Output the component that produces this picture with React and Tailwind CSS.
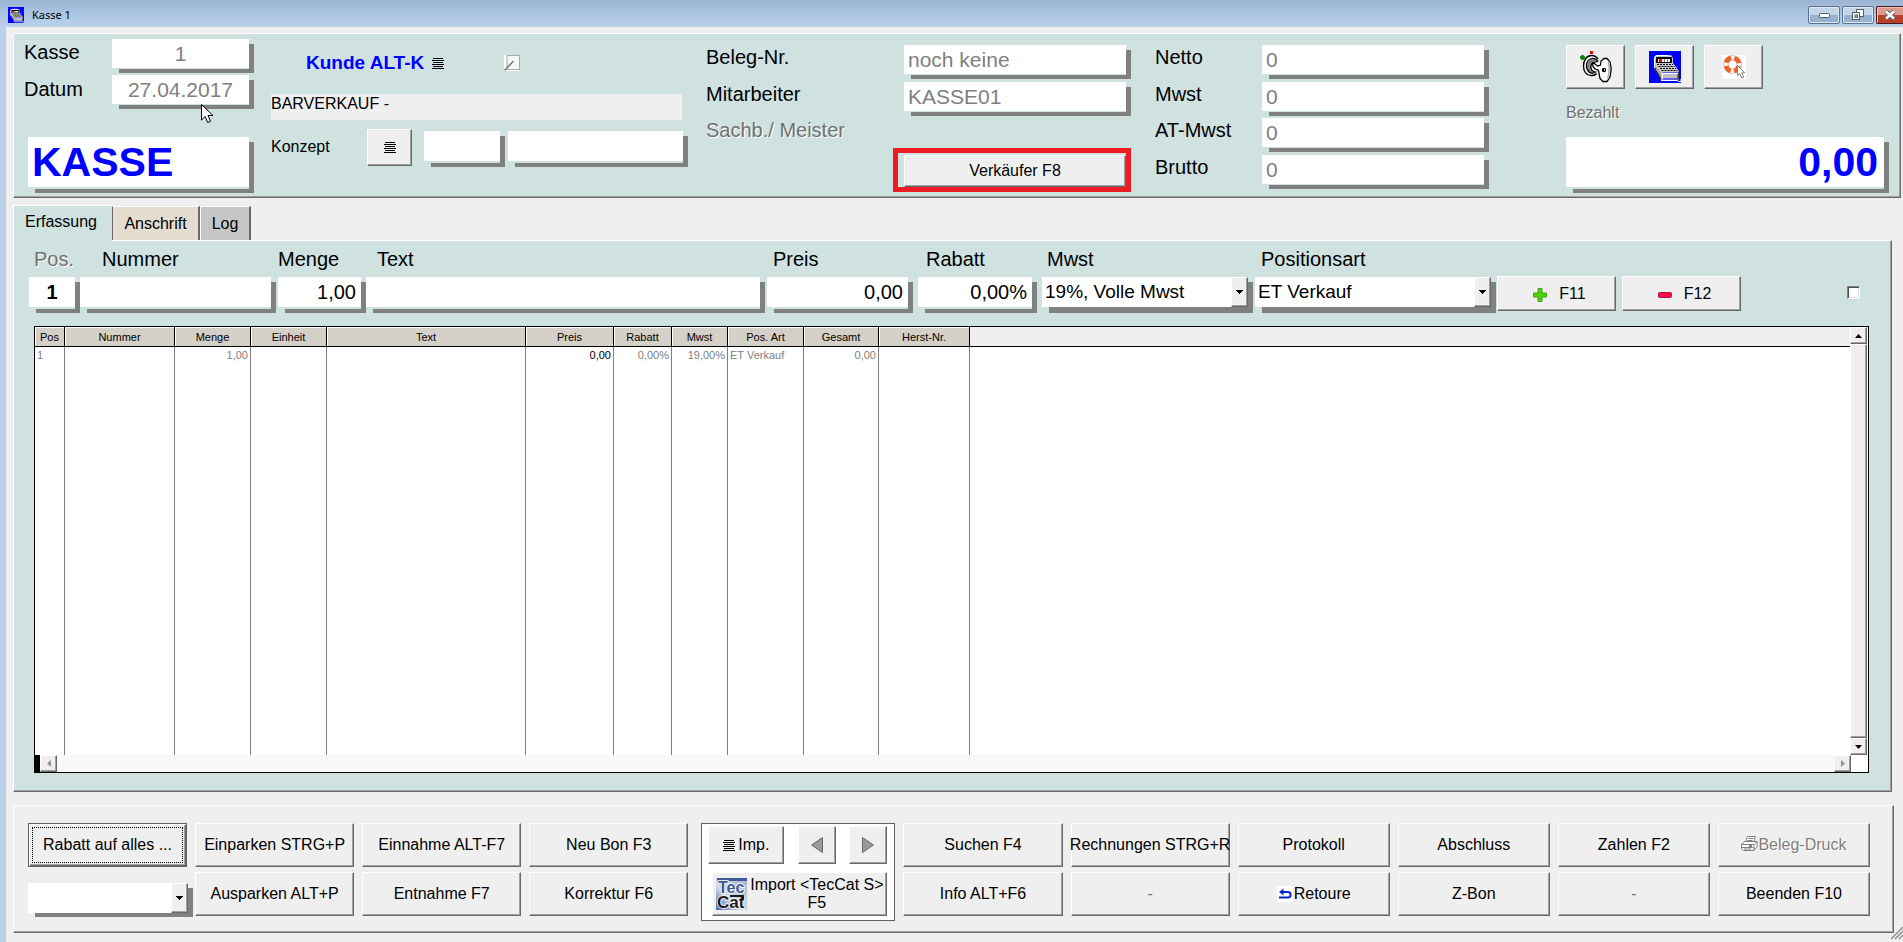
import React from "react";

const RAISED =
  "border border-t-white border-l-white border-r-[#696969] border-b-[#696969] shadow-[inset_-1px_-1px_0_#a0a0a0] bg-[#efefef]";
const PANEL =
  "border border-t-white border-l-white border-r-[#696969] border-b-[#696969] shadow-[inset_-1px_-1px_0_#a0a0a0]";
const DROP =
  "pr-[5px] bg-[linear-gradient(#808080,#808080)] bg-no-repeat bg-right-bottom bg-[length:calc(100%-7px)_calc(100%-5px)]";

function Shadowed({ className = "", children }) {
  return <div className={`${DROP} ${className}`}>{children}</div>;
}

function Field({
  label,
  value = "",
  wrap = "",
  box = "h-[30px] border-b",
  text = "text-[21px] text-[#808080] px-1",
  ...rest
}) {
  return (
    <Shadowed className={`pb-1 ${wrap}`}>
      <input
        aria-label={label}
        defaultValue={value}
        className={`block w-full border-[#cfe2e0] bg-white outline-none ${box} ${text}`}
        {...rest}
      />
    </Shadowed>
  );
}

function DropDown({ id, label, value, wrap = "", box = "h-[30px]" }) {
  return (
    <Shadowed className={wrap}>
      <div className="relative">
        <select
          id={id}
          aria-label={label}
          className={`block w-full appearance-none bg-white pl-[3px] text-[19px] text-black outline-none ${box}`}
        >
          <option>{value}</option>
        </select>
        <span
          aria-hidden="true"
          className={`pointer-events-none absolute inset-y-0 right-0 flex w-[17px] items-center justify-center ${RAISED}`}
        >
          <svg width="7" height="4" shapeRendering="crispEdges">
            <path d="M0 0h7v1h-1v1h-1v1h-1v1h-1v-1h-1v-1h-1v-1h-1z" fill="#000" />
          </svg>
        </span>
      </div>
    </Shadowed>
  );
}

function Btn({ children, className = "", ...rest }) {
  return (
    <button
      type="button"
      className={`flex min-w-0 items-center justify-center whitespace-nowrap text-[16px] text-black ${RAISED} ${className}`}
      {...rest}
    >
      {children}
    </button>
  );
}

function LinesIcon() {
  return (
    <svg width="12" height="11" shapeRendering="crispEdges" className="shrink-0">
      <path d="M1 .5h10M0 2.5h12M1 4.5h10M0 6.5h12M1 8.5h10M0 10.5h12" stroke="#000" />
    </svg>
  );
}

function RegisterIcon({ size }) {
  return (
    <svg width={size} height={size} viewBox="0 0 32 32" className="shrink-0">
      <rect width="32" height="32" fill="#00f" />
      <path d="M5 6l2-2h15l2 3v5l6 8v9H12L5 17z" fill="#c8c8c8" />
      <path d="M5 13l7 9v7L5 17z" fill="#a0a0a0" />
      <path d="M5.500 17V6.500L7.500 4.500H19" fill="none" stroke="#fff" />
      <rect x="7" y="6" width="16" height="6" rx="1" fill="#000" />
      <rect x="9" y="8" width="12" height="3" fill="#fff" />
      <rect x="10" y="8" width="3" height="3" fill="#f00" />
      <path d="M15.500 8v3M18.500 8v3" stroke="#808080" />
      <g stroke="#000" strokeWidth="1.200" strokeDasharray="2 1">
        <path d="M8 13.500h16" />
        <path d="M9.500 15.500h16" />
        <path d="M11 17.500h16" />
        <path d="M12.500 19.500h16" />
      </g>
      <path d="M5.500 17l6.500 11.500" stroke="#000" />
      <path d="M13.500 22h15.500v6H13.500z" fill="#c0c0c0" stroke="#00f" />
      <path d="M14 22.500h15M13.500 22v6" stroke="#fff" fill="none" />
      <path d="M12 29.500h16l2 1h2v-2.500" stroke="#fff" fill="none" />
      <path d="M29.500 20.500v8" stroke="#404040" />
    </svg>
  );
}

function KeyIcon() {
  return (
    <svg width="34" height="32" viewBox="0 0 34 32">
      <path d="M1 6.500h5M3.500 4v5" stroke="#008000" strokeWidth="2.400" />
      <rect x="11" y="0" width="3" height="3" fill="#f00" />
      <path
        d="M19 8C17 5 15 4.500 12.500 4.500 8 4.500 4.500 9 4.500 15c0 5.500 3 9.500 7.500 9.500 2.500 0 4.500-.5 5.500-2"
        fill="#fff"
        stroke="#000"
        strokeWidth="1.400"
      />
      <path
        d="M19 10c-1.500-2-3.500-3-6-2.500-4 .5-6 4-5.500 8.500.4 4 3 6.500 7 6l2-1c-3.500-.5-5-3-4.500-6 .3-2.500 2-4 5-4z"
        fill="#808080"
        stroke="#000"
        strokeWidth="1.200"
      />
      <path
        d="M13.500 12l2 .5 3 2.500 3-1 .5-4 3-2.500h3l3 3.500 1.200 7-1.200 8-3 4.500h-4l-3-3-1-5-.5-3-4-2-1.500-2z"
        fill="#fff"
        stroke="#000"
        strokeWidth="1.300"
      />
      <path d="M29.500 10.500c1 4 1 12-.8 17" stroke="#b0b0b0" strokeWidth="1.500" fill="none" />
      <circle cx="25" cy="19" r="2.200" fill="#000" />
      <rect x="25" y="18" width="1" height="2" fill="#aaa" />
    </svg>
  );
}

function HelpIcon() {
  return (
    <svg width="24" height="24" viewBox="0 0 24 24">
      <rect width="24" height="24" fill="#fff" />
      <circle cx="10.500" cy="9.500" r="6.600" fill="none" stroke="#b5b5b5" strokeWidth="5.600" />
      <circle cx="10.500" cy="9.500" r="6.600" fill="none" stroke="#f4f4f4" strokeWidth="4.600" />
      <circle
        cx="10.500"
        cy="9.500"
        r="6.600"
        fill="none"
        stroke="#f0602c"
        strokeWidth="4.600"
        strokeDasharray="7 3.367"
        strokeDashoffset="-1.700"
      />
      <path d="M15.500 10.500v10l2.200-2 2 4.500 2-1-2-4.200h3z" fill="#fff" stroke="#777" strokeWidth="0.900" />
    </svg>
  );
}

function NoteIcon() {
  return (
    <svg width="16" height="16">
      <rect x="0" y="0" width="16" height="16" fill="#fff" />
      <rect x="3" y="0.500" width="12.500" height="14" fill="#f6f6f6" stroke="#aaa" />
      <path d="M0.500 15.500l9-9.500" stroke="#777" strokeWidth="1.500" />
    </svg>
  );
}

function Tri({ d, fill = "#000", w, h }) {
  return (
    <svg width={w} height={h}>
      <path d={d} fill={fill} />
    </svg>
  );
}

function TecCatLogo() {
  return (
    <svg
      width="31"
      height="32"
      viewBox="0 0 31 32"
      className="shrink-0 overflow-visible"
      fontFamily="Liberation Sans, sans-serif"
      fontWeight="bold"
    >
      <defs>
        <linearGradient id="tc" x1="0" y1="1" x2="1" y2="0">
          <stop offset="0" stopColor="#4a68a8" />
          <stop offset=".4" stopColor="#d5dbe8" />
          <stop offset="1" stopColor="#a9b4cc" />
        </linearGradient>
      </defs>
      <rect width="31" height="32" fill="url(#tc)" />
      <rect x="1" width="30" height="3" fill="#3c5a96" />
      <text x="2" y="15" fontSize="16" fill="#3c5a96" stroke="#fff" strokeWidth="1.500" paintOrder="stroke">Tec</text>
      <text x="1" y="30" fontSize="17" fill="#1c1c24" stroke="#fff" strokeWidth="1.500" paintOrder="stroke">Cat</text>
      <path d="M14 18h13v3" fill="none" stroke="#1c1c24" strokeWidth="2" />
    </svg>
  );
}

function PrinterIcon() {
  return (
    <svg width="17" height="15" viewBox="0 0 17 15" fill="none" stroke="#808080" className="-mt-1 shrink-0">
      <path d="M4.500 6l2-5.500h8l-2 5.500" fill="#fff" />
      <path d="M7.500 2.500h5M6.500 4.500h5" />
      <path d="M.5 8.500l3-3h12.500v5l-3 4H2.500l-2-2z" fill="#fff" />
      <path d="M.5 8.500h12.500v6M13 8.500l3-3M1 11.500h11M3 13h7" />
      <path d="M8 10h3" strokeWidth="2" />
    </svg>
  );
}

function ReturnIcon() {
  return (
    <svg width="16" height="16" className="mr-px shrink-0">
      <rect width="16" height="16" fill="#fff" />
      <path d="M4 6h7c3.500 0 3.500 5.500 0 5.500H2" fill="none" stroke="#0a22d8" strokeWidth="2" />
      <path d="M2 6l4.500-3.500v7z" fill="#0a22d8" />
    </svg>
  );
}

function PosCell({ label, id, muted, className = "", labelPad = "pl-0", children }) {
  return (
    <div className={`min-w-0 ${className}`}>
      <label
        htmlFor={id}
        className={`block text-[20px] leading-6 ${labelPad} ${muted ? "text-[#707070] [text-shadow:1px_1px_0_#fff]" : "text-black"}`}
      >
        {label}
      </label>
      <div className="mt-[6px]">{children}</div>
    </div>
  );
}

const COLS = [
  ["Pos", "w-[30px]", "1", "text-left"],
  ["Nummer", "w-[110px]", "", ""],
  ["Menge", "w-[76px]", "1,00", "text-right"],
  ["Einheit", "w-[76px]", "", ""],
  ["Text", "w-[199px]", "", ""],
  ["Preis", "w-[88px]", "0,00", "text-right text-black"],
  ["Rabatt", "w-[58px]", "0,00%", "text-right"],
  ["Mwst", "w-[56px]", "19,00%", "text-right"],
  ["Pos. Art", "w-[76px]", "ET Verkauf", "text-left"],
  ["Gesamt", "w-[75px]", "0,00", "text-right"],
  ["Herst-Nr.", "w-[91px]", "", ""],
];

const TOTALS = [
  ["Netto", "h-[37px]"],
  ["Mwst", "h-[36px]"],
  ["AT-Mwst", "h-[37px]"],
  ["Brutto", "h-[37px]"],
];

function TitleBar() {
  const chrome =
    "flex h-[18px] items-center justify-center rounded-[2px] border border-[#5b7391] shadow-[inset_0_0_0_1px_#dbe7f4]";
  return (
    <header className="flex h-[27px] shrink-0 items-center bg-gradient-to-b from-[#9ab4d2] to-[#bbd3ed] pl-2">
      <span className="mt-[3px]">
        <RegisterIcon size={16} />
      </span>
      <h1 className="mt-[3px] ml-2 flex-1 font-['Noto_Sans',sans-serif] text-[11px] text-black">Kasse 1</h1>
      <div className="mt-[3px] flex gap-[2px]">
        <button type="button" aria-label="Minimieren" className={`${chrome} w-[32px] bg-gradient-to-b from-[#c3d5e8] from-50% to-[#97b2d0] to-50%`}>
          <svg width="11" height="5"><rect x=".5" y=".5" width="10" height="4" rx="1" fill="#fff" stroke="#555d6b" /></svg>
        </button>
        <button type="button" aria-label="Wiederherstellen" className={`${chrome} w-[32px] bg-gradient-to-b from-[#c3d5e8] from-50% to-[#97b2d0] to-50%`}>
          <svg width="13" height="12" fill="#fff" stroke="#555d6b">
            <rect x="4.500" y=".5" width="7" height="7" />
            <rect x=".5" y="3.500" width="7" height="7" />
            <rect x="3" y="6" width="2.500" height="2.500" fill="#a8bed6" />
          </svg>
        </button>
        <button type="button" aria-label="Schließen" className="flex h-[18px] w-[27px] items-center justify-center rounded-l-[2px] border border-r-0 border-[#4a1420] bg-gradient-to-b from-[#dd9a8c] from-50% to-[#b8402a] to-50% shadow-[inset_1px_1px_0_#efc4ba]">
          <svg width="12" height="10">
            <path d="M2 1.500l8 7M10 1.500l-8 7" stroke="#555d6b" strokeWidth="4.500" />
            <path d="M2 1.500l8 7M10 1.500l-8 7" stroke="#fff" strokeWidth="2.500" />
          </svg>
        </button>
      </div>
    </header>
  );
}

function HeaderPanel() {
  const lbl = "text-[20px] leading-6 text-black";
  const big = "h-[52px] border-b-2";
  const mid = "h-[32px] border-b-2";
  return (
    <section className={`mr-[2px] h-[165px] shrink-0 bg-[#cfe2e0] pr-[11px] pl-[10px] ${PANEL}`}>
      <div className="grid h-full grid-cols-[247fr_435fr_449fr_411fr_323fr]">
        <div className="pt-[5px] pr-[17px]">
          <div className="flex h-[36px] items-start justify-between">
            <label htmlFor="kasse" className="text-[20px] leading-[26px] text-black">Kasse</label>
            <Field id="kasse" readOnly value="1" wrap="w-[142px]" text="text-[21px] text-[#808080] text-center" />
          </div>
          <div className="flex h-[36px] items-start justify-between">
            <label htmlFor="datum" className="text-[20px] leading-[28px] text-black">Datum</label>
            <Field id="datum" readOnly value="27.04.2017" wrap="w-[142px]" text="text-[21px] text-[#808080] text-center" />
          </div>
          <Field
            label="Modus"
            readOnly
            value="KASSE"
            wrap="mt-[26px] ml-[4px]"
            box={big}
            text="text-[41px] font-bold text-[#00f] px-1 leading-none"
          />
        </div>

        <div className="pt-[16px] pr-[18px]">
          <div className="flex h-[26px] items-center pl-[35px]">
            <button type="button" className="flex items-center gap-[8px] text-[19px] font-bold text-[#00f]">
              Kunde ALT-K <LinesIcon />
            </button>
            <button type="button" aria-label="Notiz" className="ml-[60px]">
              <NoteIcon />
            </button>
          </div>
          <div className="mt-[18px] mr-[6px] h-[26px] bg-[#efefef] text-[16px] leading-[19px] text-black">BARVERKAUF -</div>
          <div className="mt-[9px] flex items-start">
            <label htmlFor="konzept" className="w-[96px] text-[16px] leading-9 text-black">Konzept</label>
            <Btn aria-label="Konzept wählen" className="h-[37px] w-[45px]"><LinesIcon /></Btn>
            <Field id="konzept" wrap="mt-[2px] ml-[12px] w-[81px]" box={mid} />
            <Field label="Konzept Text" wrap="mt-[2px] ml-[3px] flex-1" box={mid} />
          </div>
        </div>

        <div className="pt-[11px] pr-[24px]">
          <div className="flex h-[37px] items-start justify-between">
            <label htmlFor="beleg" className={lbl}>Beleg-Nr.</label>
            <Field id="beleg" readOnly value="noch keine" wrap="w-[227px]" />
          </div>
          <div className="flex h-[36px] items-start justify-between">
            <label htmlFor="mitarbeiter" className={lbl}>Mitarbeiter</label>
            <Field id="mitarbeiter" readOnly value="KASSE01" wrap="w-[227px]" />
          </div>
          <div className="text-[20px] leading-6 text-[#707070] [text-shadow:1px_1px_0_#fff]">Sachb./ Meister</div>
          <div className="mt-[6px] ml-auto w-[238px] border-[5px] border-[#ed1c24] pt-[2px] pl-[6px]">
            <Btn className="h-[32px] w-full">Verkäufer F8</Btn>
          </div>
        </div>

        <div className="pt-[11px] pr-[77px]">
          {TOTALS.map(([t, h]) => (
            <div key={t} className={`flex items-start justify-between ${h}`}>
              <label htmlFor={`sum-${t}`} className={lbl}>{t}</label>
              <Field id={`sum-${t}`} readOnly value="0" wrap="w-[227px]" />
            </div>
          ))}
        </div>

        <div className="pt-[11px]">
          <div className="flex gap-[10px]">
            <Btn aria-label="Schlüssel" className="h-[44px] w-[59px]"><KeyIcon /></Btn>
            <Btn aria-label="Kasse" className="h-[44px] w-[59px]"><RegisterIcon size={32} /></Btn>
            <Btn aria-label="Hilfe" className="h-[44px] w-[59px]"><HelpIcon /></Btn>
          </div>
          <label htmlFor="bezahlt" className="mt-[12px] block text-[16px] leading-6 text-[#707070] [text-shadow:1px_1px_0_#fff]">
            Bezahlt
          </label>
          <Field
            id="bezahlt"
            readOnly
            value="0,00"
            wrap="mt-[12px]"
            box={big}
            text="text-[41px] font-bold text-[#00f] pr-[6px] text-right leading-none"
          />
        </div>
      </div>
    </section>
  );
}

function EntryRow() {
  const t = "text-[20px] text-black px-[5px]";
  const r = t + " text-right";
  const box = "h-[32px] border-b-2";
  return (
    <div className="grid grid-cols-[51fr_198fr_88fr_401fr_151fr_124fr_213fr_242fr_125fr_119fr_119fr]">
      <PosCell id="p-pos" label="Pos." muted labelPad="pl-[5px]">
        <Field id="p-pos" value="1" box={box} text="text-[20px] font-bold text-black text-center" />
      </PosCell>
      <PosCell id="p-nr" label="Nummer" labelPad="pl-[22px]" className="pr-[2px]">
        <Field id="p-nr" box={box} text={t} />
      </PosCell>
      <PosCell id="p-menge" label="Menge">
        <Field id="p-menge" value="1,00" box={box} text={r} />
      </PosCell>
      <PosCell id="p-text" label="Text" labelPad="pl-[11px]" className="pr-[2px]">
        <Field id="p-text" box={box} text={t} />
      </PosCell>
      <PosCell id="p-preis" label="Preis" labelPad="pl-[6px]" className="pr-[5px]">
        <Field id="p-preis" value="0,00" box={box} text={r} />
      </PosCell>
      <PosCell id="p-rabatt" label="Rabatt" labelPad="pl-[8px]" className="pr-[5px]">
        <Field id="p-rabatt" value="0,00%" box={box} text={r} />
      </PosCell>
      <PosCell id="p-mwst" label="Mwst" labelPad="pl-[5px]" className="pr-[2px]">
        <DropDown id="p-mwst" value="19%, Volle Mwst" wrap="pb-[6px]" />
      </PosCell>
      <PosCell id="p-art" label="Positionsart" labelPad="pl-[6px]" className="pr-[1px]">
        <DropDown id="p-art" value="ET Verkauf" wrap="pb-[6px]" />
      </PosCell>
      <div className="pt-[29px] pr-[6px]">
        <Btn className="h-[35px] w-full gap-[12px] pl-[6px]">
          <svg width="14" height="14" className="mt-[2px]">
            <path d="M5 .5h4V5h4.500v4H9v4.500H5V9H.5V5H5z" fill="#4ad400" stroke="#4a9a2c" />
          </svg>
          F11
        </Btn>
      </div>
      <div className="pt-[29px]">
        <Btn className="h-[35px] w-full gap-[12px] pl-[6px]">
          <svg width="14" height="6" className="mt-[2px]">
            <rect x=".5" y=".5" width="13" height="5" rx="1" fill="#f0104c" stroke="#b8103c" />
          </svg>
          F12
        </Btn>
      </div>
      <div className="flex justify-end pt-[39px]">
        <input
          type="checkbox"
          aria-label="Markierung"
          className="h-[13px] w-[13px] appearance-none border border-t-[#808080] border-r-white border-b-white border-l-[#808080] bg-white shadow-[inset_1px_1px_0_#505050,inset_-1px_-1px_0_#e3e3e3]"
        />
      </div>
    </div>
  );
}

function PositionsTable() {
  const sb = `flex h-[17px] w-[17px] shrink-0 items-center justify-center ${RAISED}`;
  return (
    <div className="mt-[13px] flex min-h-0 flex-1 flex-col border border-black bg-white">
      <div className="flex min-h-0 flex-1">
        <table className="h-full w-full table-fixed border-separate border-spacing-0 text-[11px]">
          <thead>
            <tr className="h-[20px]">
              {COLS.map(([name, w]) => (
                <th
                  key={name}
                  scope="col"
                  className={`${w} border-r border-b border-black bg-[#d4d0c8] p-0 text-center leading-[18px] font-normal text-black shadow-[inset_1px_1px_0_#fff]`}
                >
                  {name}
                </th>
              ))}
              <th aria-label="leer" className="border-b border-black bg-[#efefef] p-0" />
            </tr>
          </thead>
          <tbody>
            <tr className="h-[16px] text-[#808080]">
              {COLS.map(([name, , v, cls]) => (
                <td key={name} className={`border-r border-[#808080] px-[2px] py-0 leading-[16px] whitespace-nowrap ${cls}`}>
                  {v}
                </td>
              ))}
              <td className="p-0" />
            </tr>
            <tr>
              {COLS.map(([name]) => (
                <td key={name} className="border-r border-[#808080] p-0" />
              ))}
              <td className="p-0" />
            </tr>
          </tbody>
        </table>
        <div className="mr-[1px] flex w-[17px] shrink-0 flex-col">
          <button type="button" aria-label="Nach oben" className={sb}>
            <Tri w="7" h="4" d="M3.500 0L7 4H0z" />
          </button>
          <div className={`flex-1 ${RAISED}`} />
          <button type="button" aria-label="Nach unten" className={sb}>
            <Tri w="7" h="4" d="M0 0h7L3.500 4z" />
          </button>
        </div>
      </div>
      <div className="flex h-[17px] shrink-0 border-l-[5px] border-black bg-[#f8f8f8]">
        <button type="button" aria-label="Nach links" className={sb}>
          <Tri w="4" h="7" fill="#909090" d="M4 0v7L0 3.500z" />
        </button>
        <div className="flex-1" />
        <button type="button" aria-label="Nach rechts" className={sb}>
          <Tri w="4" h="7" fill="#909090" d="M0 0v7l4-3.500z" />
        </button>
        <div className="w-[17px] bg-white" />
      </div>
    </div>
  );
}

function ActionPanel() {
  return (
    <section className={`mt-[13px] mr-[9px] shrink-0 pt-[17px] pr-[23px] pb-[16px] pl-[14px] ${PANEL}`}>
      <div className="grid grid-cols-[159fr_159fr_159fr_159fr_199fr_159fr_159fr_152fr_152fr_152fr_152fr] grid-rows-[44px_44px] gap-x-[8px] gap-y-[5px]">
        <button
          type="button"
          className="border border-[#606060] bg-[#efefef] p-[3px] text-[16px] whitespace-nowrap text-black shadow-[inset_1px_1px_0_#fff,inset_-1px_-1px_0_#696969,inset_-2px_-2px_0_#a0a0a0]"
        >
          <span className="flex h-full items-center justify-center border border-dotted border-black">Rabatt auf alles ...</span>
        </button>
        <Btn>Einparken STRG+P</Btn>
        <Btn>Einnahme ALT-F7</Btn>
        <Btn>Neu Bon F3</Btn>
        <div className="row-span-2 -mb-[5px] ml-[5px] h-[98px] border border-[#606060] bg-white pt-[2px] pr-[7px] pl-[6px]">
          <div className="flex h-[38px] justify-between">
            <Btn className="w-[76px] gap-[3px]"><LinesIcon />Imp.</Btn>
            <Btn aria-label="Zurück" className="w-[38px]">
              <svg width="12" height="16"><path d="M11.500 .5v15L.5 8z" fill="#9a9a9a" stroke="#6a6a6a" /></svg>
            </Btn>
            <Btn aria-label="Weiter" className="w-[38px]">
              <svg width="12" height="16"><path d="M.5 .5v15L11.500 8z" fill="#9a9a9a" stroke="#6a6a6a" /></svg>
            </Btn>
          </div>
          <Btn className="mt-[8px] ml-[4px] h-[44px] w-[calc(100%-4px)] gap-[3px] leading-[18px]">
            <TecCatLogo />
            <span>Import &lt;TecCat S&gt;<br />F5</span>
          </Btn>
        </div>
        <Btn>Suchen F4</Btn>
        <Btn>Rechnungen STRG+R</Btn>
        <Btn>Protokoll</Btn>
        <Btn>Abschluss</Btn>
        <Btn>Zahlen F2</Btn>
        <button
          type="button"
          disabled
          className={`flex items-center justify-center text-[16px] whitespace-nowrap text-[#808080] [text-shadow:1px_1px_0_#fff] ${RAISED}`}
        >
          <PrinterIcon />Beleg-Druck
        </button>

        <div className="-mr-[6px] pt-[11px]">
          <DropDown label="Rabattauswahl" value="" wrap="pb-[4px]" />
        </div>
        <Btn>Ausparken ALT+P</Btn>
        <Btn>Entnahme F7</Btn>
        <Btn>Korrektur F6</Btn>
        <Btn>Info ALT+F6</Btn>
        <Btn><span className="text-[#707070]">-</span></Btn>
        <Btn><ReturnIcon />Retoure</Btn>
        <Btn>Z-Bon</Btn>
        <Btn><span className="text-[#707070]">-</span></Btn>
        <Btn>Beenden F10</Btn>
      </div>
    </section>
  );
}

export default function App() {
  const tab = "border-t border-l border-white border-r-2 border-r-[#696969] text-[16px] text-black";
  return (
    <div className="relative flex h-screen min-h-[720px] min-w-[1600px] flex-col overflow-hidden bg-[#efefef] font-['Liberation_Sans',Arial,sans-serif]">
      <TitleBar />
      <main className="flex min-h-0 flex-1 flex-col border-l-[6px] border-[#bbd0ea] pt-[6px] pb-[9px] pl-[7px]">
        <HeaderPanel />
        <div role="tablist" className="mt-[7px] flex h-[35px] shrink-0 items-end">
          <button type="button" role="tab" aria-selected="true" className="relative -mb-px h-[36px] w-[99px] rounded-tl-[2px] border-t border-l border-white bg-[#cfe2e0] pr-[4px] pb-[3px] text-[16px] text-black">
            Erfassung
          </button>
          <button type="button" role="tab" aria-selected="false" className={`${tab} h-[34px] w-[88px] border-l-[#696969] bg-[#e3dccf]`}>Anschrift</button>
          <button type="button" role="tab" aria-selected="false" className={`${tab} h-[34px] w-[51px] bg-[#c6c6c6]`}>Log</button>
        </div>
        <section className={`mr-[11px] flex min-h-0 flex-1 flex-col bg-[#cfe2e0] pt-[6px] pb-[18px] ${PANEL}`}>
          <div className="pr-[31px] pl-[15px]">
            <EntryRow />
          </div>
          <div className="flex min-h-0 flex-1 flex-col pr-[22px] pl-[20px]">
            <PositionsTable />
          </div>
        </section>
        <ActionPanel />
      </main>
      <svg className="absolute right-0 bottom-[2px]" width="12" height="14" stroke="#909090" strokeWidth="1.500">
        <path d="M0 13L12 1M4 13l8-8M8 13l4-4" />
      </svg>
      <svg className="pointer-events-none absolute top-[104px] left-[201px]" width="13" height="20" viewBox="0 0 13 20">
        <path d="M.5 .5v15.500l3.700-3.500 2.500 6 2.800-1.200-2.500-5.800h5z" fill="#fff" stroke="#000" />
      </svg>
    </div>
  );
}
